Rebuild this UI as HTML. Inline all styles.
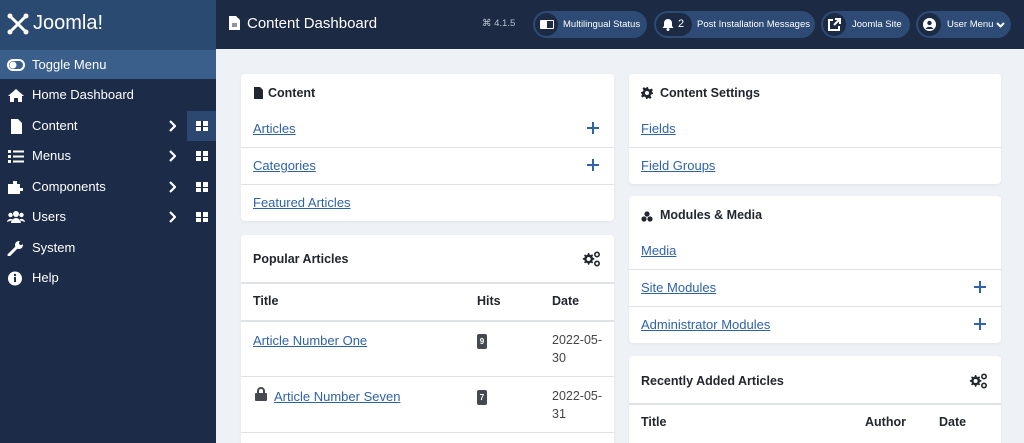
<!DOCTYPE html>
<html><head><meta charset="utf-8"><style>
*{box-sizing:border-box;margin:0;padding:0}
html{width:1024px;height:443px;overflow:hidden}
body{width:1024px;height:443px;overflow:hidden;background:#eef2f7;font-family:"Liberation Sans",sans-serif;position:relative}
.a{position:absolute}
#side{left:0;top:0;width:216px;height:443px;background:#1c2c48}
#logo{left:0;top:0;width:216px;height:50px;background:#2b4a72}
#hdr{left:216px;top:0;width:808px;height:49px;background:#1c2a44}
.si{position:absolute;left:0;width:216px;height:30px;color:#fff;font-size:13px;line-height:30px}
.si span{position:absolute;left:32px}
.si svg{position:absolute;left:7px;top:8px}
.chev{position:absolute;left:168px;top:9px;width:8px;height:12px}
.grid{position:absolute;left:187px;top:0;width:29px;height:30px}
.grid i{position:absolute;left:9px;top:10px;width:12px;height:10px;background:#fff}
.grid i:before{content:"";position:absolute;left:5px;top:0;width:1.5px;height:10px;background:#1c2c48}
.grid i:after{content:"";position:absolute;left:0;top:4.5px;width:12px;height:1.5px;background:#1c2c48}
.pill{position:absolute;top:11px;height:27px;border-radius:14px;background:#2d4b75;color:#fff;font-size:9.5px;line-height:27px;white-space:nowrap}
.pill .c{position:absolute;left:2px;top:2px;width:23px;height:23px;border-radius:50%;background:#1c2a44}
.card{position:absolute;background:#fff;border-radius:4px;box-shadow:0 1px 3px rgba(0,0,0,.06)}
.ch{position:absolute;left:12px;font-size:12.5px;font-weight:bold;color:#22262e}
.lk{position:absolute;left:12px;font-size:13px;color:#2f63a8;text-decoration:underline}
.hr{position:absolute;left:0;right:0;height:1px;background:#dfe3e8}
.plus{position:absolute;right:15px;width:12px;height:12px}
.plus:before{content:"";position:absolute;left:5px;top:0;width:2.2px;height:12px;background:#2f63a8}
.plus:after{content:"";position:absolute;left:0;top:5px;width:12px;height:2.2px;background:#2f63a8}
.th{position:absolute;font-size:12.5px;font-weight:bold;color:#22262e}
.td{position:absolute;font-size:12.5px;color:#444;line-height:18px}
.bd{position:absolute;width:10px;height:15px;background:#454a50;border-radius:2px;color:#fff;font-size:8px;font-weight:bold;text-align:center;line-height:15px}
.gear{position:absolute;right:14px}
</style></head><body>
<div id="side" class="a"></div>
<div id="logo" class="a">
<svg class="a" style="left:6px;top:12px" width="24" height="24" viewBox="0 0 24 24" fill="none" stroke="#fff" stroke-width="3" stroke-linecap="round"><path d="M6 6l12 12M18 6L6 18"/><circle cx="4" cy="4" r="2.5" fill="#fff" stroke="none"/><circle cx="20" cy="4" r="2.5" fill="#fff" stroke="none"/><circle cx="4" cy="20" r="2.5" fill="#fff" stroke="none"/><circle cx="20" cy="20" r="2.5" fill="#fff" stroke="none"/></svg>
<div class="a" style="left:33px;top:12px;color:#fff;font-size:20px">Joomla!</div>
</div>
<svg width="0" height="0" style="position:absolute"><defs><symbol id="ch" viewBox="0 0 8 12"><path d="M2 1l5 5-5 5" stroke="#fff" stroke-width="2.2" fill="none"/></symbol><symbol id="gr" viewBox="0 0 18 16"><path d="M6 2l1.2 0 .4 1.5 1.3.6 1.3-.8.9.9-.8 1.3.6 1.3 1.5.4v1.3l-1.5.4-.6 1.3.8 1.3-.9.9-1.3-.8-1.3.6-.4 1.5H6l-.4-1.5-1.3-.6-1.3.8-.9-.9.8-1.3-.6-1.3L.8 8.6V7.3l1.5-.4.6-1.3-.8-1.3.9-.9 1.3.8 1.3-.6z" fill="#22262e"/><circle cx="6.6" cy="8" r="2" fill="#fff"/><circle cx="15" cy="3.5" r="2.2" fill="none" stroke="#22262e" stroke-width="1.6"/><circle cx="15" cy="12.5" r="2.2" fill="none" stroke="#22262e" stroke-width="1.6"/></symbol></defs></svg>
<div class="si" style="top:50px;background:#3b5f8b;height:29px;line-height:29px"><svg width="18" height="14" viewBox="0 0 18 14"><rect x="1" y="2" width="16" height="10" rx="5" fill="none" stroke="#fff" stroke-width="2"/><circle cx="6" cy="7" r="3.5" fill="#fff"/></svg><span>Toggle Menu</span></div>
<div class="si" style="top:80px"><svg width="18" height="14" viewBox="0 0 18 14"><path d="M9 1L1 8h2v6h4V10h4v4h4V8h2z" fill="#fff"/></svg><span>Home Dashboard</span></div>
<div class="si" style="top:111px"><svg width="18" height="15" viewBox="0 0 18 15"><path d="M4 0h7l4 4v11H4z" fill="#fff"/></svg><span>Content</span><svg class="chev" style="left:168px;top:9px"><use href="#ch"/></svg><div class="grid" style="background:#2c4770"><i></i></div></div>
<div class="si" style="top:141px"><svg width="18" height="14" viewBox="0 0 18 14" fill="#fff"><rect x="1" y="1" width="3" height="3"/><rect x="6" y="1.5" width="11" height="2"/><rect x="1" y="6" width="3" height="3"/><rect x="6" y="6.5" width="11" height="2"/><rect x="1" y="11" width="3" height="3"/><rect x="6" y="11.5" width="11" height="2"/></svg><span>Menus</span><svg class="chev" style="left:168px;top:9px"><use href="#ch"/></svg><div class="grid"><i></i></div></div>
<div class="si" style="top:172px"><svg width="18" height="14" viewBox="0 0 18 14"><path d="M1 4h5V1h4v3h3v4h3v3h-3v3H1z" fill="#fff"/></svg><span>Components</span><svg class="chev" style="left:168px;top:9px"><use href="#ch"/></svg><div class="grid"><i></i></div></div>
<div class="si" style="top:202px"><svg width="18" height="14" viewBox="0 0 18 14" fill="#fff"><circle cx="9" cy="4" r="3"/><circle cx="3.5" cy="5" r="2.2"/><circle cx="14.5" cy="5" r="2.2"/><path d="M4 13a5 5 0 0110 0zM0 12a3.5 3.5 0 016-2zM18 12a3.5 3.5 0 00-6-2z"/></svg><span>Users</span><svg class="chev" style="left:168px;top:9px"><use href="#ch"/></svg><div class="grid"><i></i></div></div>
<div class="si" style="top:233px"><svg width="18" height="15" viewBox="0 0 18 15"><path d="M2 14l8-8" stroke="#fff" stroke-width="3" stroke-linecap="round"/><circle cx="12" cy="4" r="4" fill="#fff"/><circle cx="14" cy="2" r="2" fill="#1c2c48"/></svg><span>System</span></div>
<div class="si" style="top:263px"><svg width="18" height="15" viewBox="0 0 18 15"><circle cx="8" cy="7.5" r="7" fill="#fff"/><rect x="7" y="6" width="2" height="5" fill="#1c2c48"/><circle cx="8" cy="4" r="1.2" fill="#1c2c48"/></svg><span>Help</span></div>

<div id="hdr" class="a">
<svg class="a" style="left:13px;top:16px" width="11" height="14" viewBox="0 0 11 14"><path d="M0 0h7l4 4v10H0z" fill="#fff"/><path d="M3 8h5M3 10h5" stroke="#1c2a44"/></svg>
<div class="a" style="left:31px;top:15px;color:#fff;font-size:15px">Content Dashboard</div>
<div class="a" style="left:266px;top:18px;color:#b9c2d0;font-size:9.5px">⌘ 4.1.5</div>
</div>
<div class="pill" style="left:533px;width:114px"><div class="c"></div><svg class="a" style="left:7px;top:9px" width="14" height="9"><rect width="14" height="9" rx="1" fill="#fff"/><rect x="7" y="1" width="6" height="7" fill="#1c2a44"/></svg><span class="a" style="left:30px">Multilingual Status</span></div>
<div class="pill" style="left:654px;width:161px"><div class="c" style="width:36px;border-radius:12px"></div><svg class="a" style="left:8px;top:7px" width="12" height="13" viewBox="0 0 12 13"><path d="M6 1a4 4 0 014 4v3l1.5 2h-11L2 8V5a4 4 0 014-4z" fill="#fff"/><circle cx="6" cy="11.5" r="1.5" fill="#fff"/></svg><span class="a" style="left:24px;font-size:11px">2</span><span class="a" style="left:43px">Post Installation Messages</span></div>
<div class="pill" style="left:821px;width:89px"><div class="c"></div><svg class="a" style="left:7px;top:7px" width="13" height="13" viewBox="0 0 13 13" fill="none" stroke="#fff" stroke-width="2"><path d="M5 2H1v10h10V8M7 1h5v5M12 1L6 7"/></svg><span class="a" style="left:31px">Joomla Site</span></div>
<div class="pill" style="left:916px;width:95px"><div class="c"></div><svg class="a" style="left:7px;top:7px" width="13" height="13"><circle cx="6.5" cy="6.5" r="6.5" fill="#fff"/><circle cx="6.5" cy="5" r="2.2" fill="#1c2a44"/><path d="M2.5 11a4.5 4 0 018 0z" fill="#1c2a44"/></svg><span class="a" style="left:31px">User Menu</span><svg class="a" style="left:80px;top:11px" width="9" height="6" viewBox="0 0 9 6"><path d="M1 1l3.5 3.5L8 1" stroke="#fff" stroke-width="2" fill="none"/></svg></div>

<div class="card" style="left:241px;top:74px;width:373px;height:147px">
<svg class="a" style="left:13px;top:13px" width="9" height="12"><path d="M0 0h6l3 3v9H0z" fill="#22262e"/></svg>
<div class="ch" style="left:27px;top:12px">Content</div>
<div class="lk" style="top:47px">Articles</div><div class="plus" style="top:48px"></div>
<div class="hr" style="top:73px"></div>
<div class="lk" style="top:84px">Categories</div><div class="plus" style="top:85px"></div>
<div class="hr" style="top:110px"></div>
<div class="lk" style="top:121px">Featured Articles</div>
</div>

<div class="card" style="left:241px;top:235px;width:373px;height:215px">
<div class="ch" style="top:17px">Popular Articles</div>
<svg class="gear" style="top:16px" width="18" height="16"><use href="#gr"/></svg>
<div class="hr" style="top:47px;height:2px"></div>
<div class="th" style="left:12px;top:59px">Title</div><div class="th" style="left:236px;top:59px">Hits</div><div class="th" style="left:311px;top:59px">Date</div>
<div class="hr" style="top:85px;height:2px"></div>
<div class="lk" style="top:98px">Article Number One</div><div class="bd" style="left:236px;top:99px">9</div><div class="td" style="left:311px;top:96px">2022-05-<br>30</div>
<div class="hr" style="top:141px"></div>
<svg class="a" style="left:14px;top:152px" width="12" height="14"><path d="M3 6V4a3 3 0 016 0v2" stroke="#454a50" stroke-width="2" fill="none"/><rect y="6" width="12" height="8" rx="1" fill="#454a50"/></svg>
<div class="lk" style="left:33px;top:154px">Article Number Seven</div><div class="bd" style="left:236px;top:155px">7</div><div class="td" style="left:311px;top:152px">2022-05-<br>31</div>
<div class="hr" style="top:197px"></div>
</div>

<div class="card" style="left:629px;top:74px;width:372px;height:110px">
<svg class="a" style="left:12px;top:13px" width="12" height="12" viewBox="0 0 12 12"><path d="M5 0h2l.4 1.8 1.5.7 1.6-1 1.4 1.4-1 1.6.7 1.5L12 5v2l-1.8.4-.7 1.5 1 1.6-1.4 1.4-1.6-1-1.5.7L7 12H5l-.4-1.8-1.5-.7-1.6 1L.1 9.1l1-1.6-.7-1.5L0 7V5l1.8-.4.7-1.5-1-1.6L2.9.1l1.6 1 1.5-.7z" fill="#22262e"/><circle cx="6" cy="6" r="2" fill="#fff"/></svg>
<div class="ch" style="left:31px;top:12px">Content Settings</div>
<div class="lk" style="top:47px">Fields</div>
<div class="hr" style="top:73px"></div>
<div class="lk" style="top:84px">Field Groups</div>
</div>

<div class="card" style="left:629px;top:196px;width:372px;height:147px">
<div class="a" style="left:12px;top:13px;width:12px;height:11px;"><svg width="12" height="11"><circle cx="6" cy="3" r="2.6" fill="#22262e"/><circle cx="3" cy="8" r="2.6" fill="#22262e"/><circle cx="9" cy="8" r="2.6" fill="#22262e"/></svg></div>
<div class="ch" style="left:31px;top:12px">Modules &amp; Media</div>
<div class="lk" style="top:47px">Media</div>
<div class="hr" style="top:73px"></div>
<div class="lk" style="top:84px">Site Modules</div><div class="plus" style="top:85px"></div>
<div class="hr" style="top:110px"></div>
<div class="lk" style="top:121px">Administrator Modules</div><div class="plus" style="top:122px"></div>
</div>

<div class="card" style="left:629px;top:356px;width:372px;height:100px">
<div class="ch" style="top:18px">Recently Added Articles</div>
<svg class="gear" style="top:17px" width="18" height="16"><use href="#gr"/></svg>
<div class="hr" style="top:47px;height:2px"></div>
<div class="th" style="left:12px;top:59px">Title</div><div class="th" style="left:236px;top:59px">Author</div><div class="th" style="left:310px;top:59px">Date</div>
</div>
</body></html>
